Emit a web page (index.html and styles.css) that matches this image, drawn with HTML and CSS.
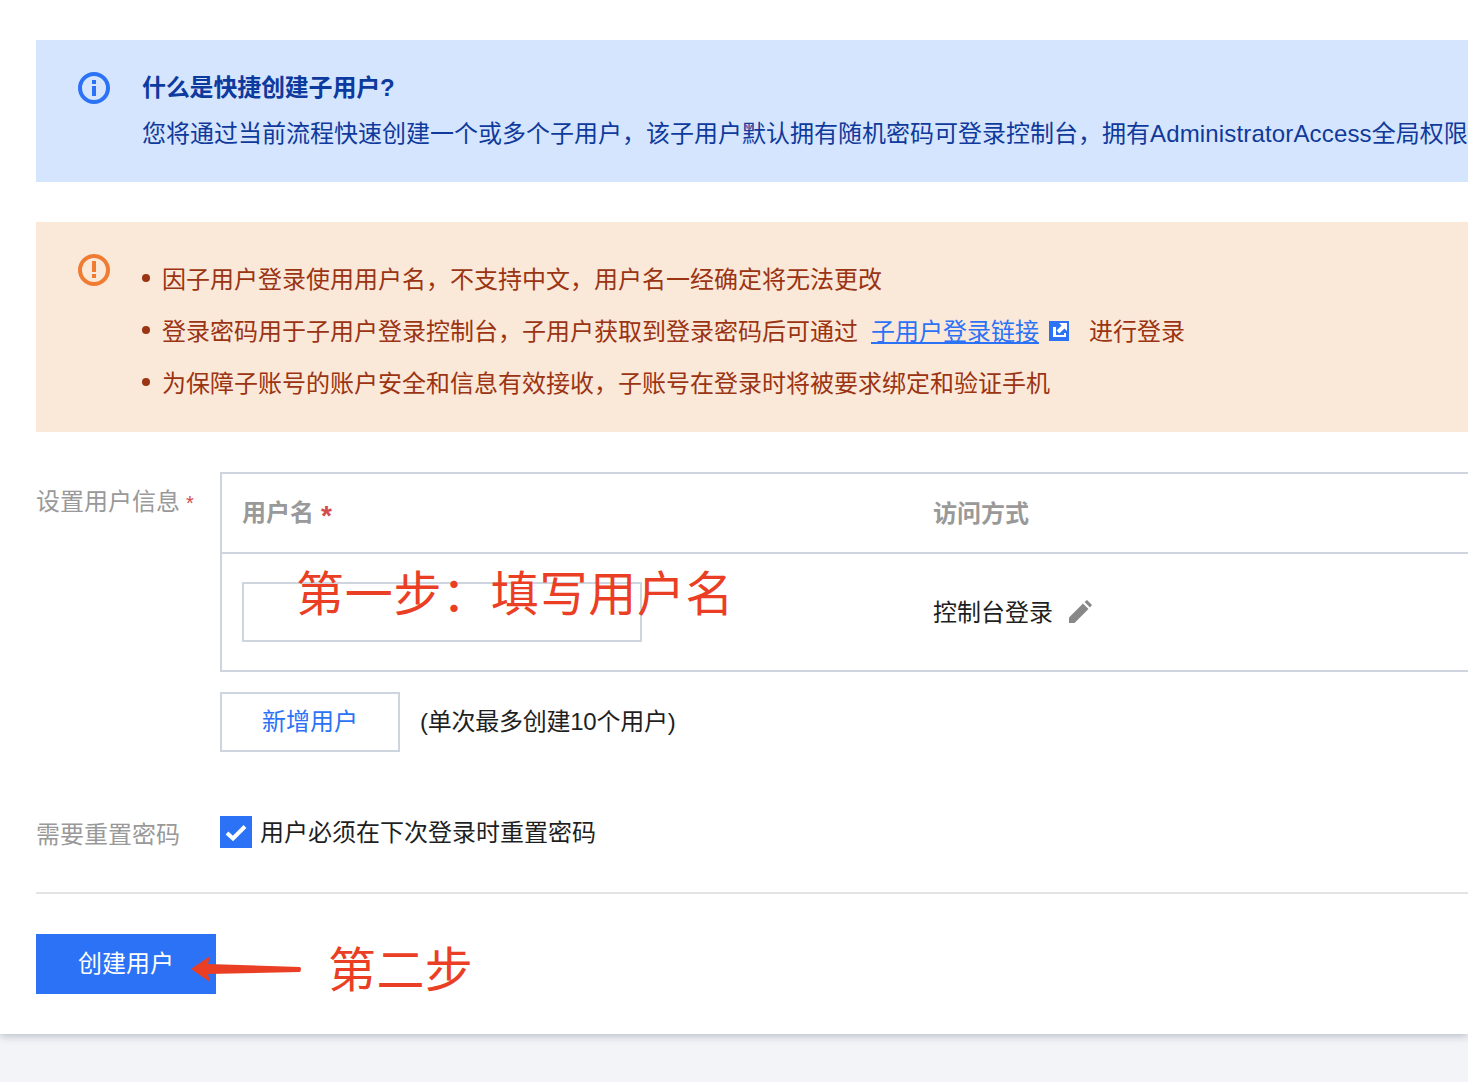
FILE: index.html
```html
<!DOCTYPE html>
<html lang="zh-CN">
<head>
<meta charset="utf-8">
<title>快捷创建子用户</title>
<link rel="stylesheet" href="styles.css">
</head>
<body>
<main class="page">
  <section class="notice notice-info">
    <svg class="notice-icon" viewBox="0 0 32 32"><circle cx="16" cy="16" r="14" fill="none" stroke="#2b72f6" stroke-width="4"/><rect x="14" y="8" width="4" height="4" fill="#2b72f6"/><rect x="14" y="14" width="4" height="10" fill="#2b72f6"/></svg>
    <div class="notice-body">
      <h2 class="notice-title">什么是快捷创建子用户?</h2>
      <p class="notice-text">您将通过当前流程快速创建一个或多个子用户，该子用户默认拥有随机密码可登录控制台，拥有<span class="latin">AdministratorAccess</span>全局权限</p>
    </div>
  </section>

  <section class="notice notice-warn">
    <svg class="notice-icon" viewBox="0 0 32 32"><circle cx="16" cy="16" r="14" fill="none" stroke="#f07b33" stroke-width="4"/><rect x="14" y="7" width="4" height="11" fill="#f07b33"/><rect x="14" y="20" width="4" height="4" fill="#f07b33"/></svg>
    <ul class="warn-list">
      <li>因子用户登录使用用户名，不支持中文，用户名一经确定将无法更改</li>
      <li>登录密码用于子用户登录控制台，子用户获取到登录密码后可通过<a class="warn-link" href="#">子用户登录链接</a><svg class="ext-icon" viewBox="0 0 20 20"><rect width="20" height="20" fill="#2b72f6"/><path d="M4 6h3v8h8v-2h2v4H4z" fill="#fff"/><path d="M10 2h8v8l-2.600-2.600-5 5-2.800-2.800 5-5z" fill="#fff"/></svg><span class="after-link">进行登录</span></li>
      <li>为保障子账号的账户安全和信息有效接收，子账号在登录时将被要求绑定和验证手机</li>
    </ul>
  </section>

  <section class="form-row user-row">
    <div class="form-label">设置用户信息<span class="req">*</span></div>
    <div class="form-main">
      <div class="user-table">
        <div class="table-head">
          <div class="col-name">用户名<span class="req req-strong">*</span></div>
          <div class="col-access">访问方式</div>
        </div>
        <div class="table-row">
          <div class="col-name"><div class="name-input"></div></div>
          <div class="col-access access-value">控制台登录<svg class="edit-icon" viewBox="0 0 24 24"><path d="M1 23v-5.500L15 3.500 20.500 9 6.500 23z" fill="#888"/><path d="M16.500 2 19 0l5 5-2 2.500z" fill="#888"/></svg></div>
        </div>
      </div>
      <div class="add-row">
        <button class="btn-add" type="button">新增用户</button>
        <span class="add-hint">(单次最多创建10个用户)</span>
      </div>
    </div>
  </section>

  <section class="form-row reset-row">
    <div class="form-label">需要重置密码</div>
    <label class="check">
      <svg class="check-box" viewBox="0 0 32 32"><rect width="32" height="32" fill="#2b72f6"/><path d="M7 17l6 5.500L25 10.500" fill="none" stroke="#fff" stroke-width="4"/></svg>
      <span class="check-text">用户必须在下次登录时重置密码</span>
    </label>
  </section>

  <hr class="divider">

  <button class="btn-primary" type="button">创建用户</button>

  <div class="note note-one">第一步：填写用户名</div>
  <div class="note note-two">第二步</div>
  <svg class="note-arrow" viewBox="0 0 112 30"><path d="M1 14 20 1l-2 8 92 3q2 2 0 5L18 19l2 8z" fill="#ea3f24"/></svg>
</main>
<div class="footer-band"></div>
</body>
</html>
```
FILE: styles.css
```css
* { box-sizing: border-box; }
html, body { margin: 0; height: 100%; }
body {
  background: #f2f4f8;
  font-family: "Liberation Sans", "Noto Sans CJK SC", sans-serif;
  font-size: 24px;
  color: #1f1f1f;
  overflow: hidden;
}
.page {
  position: relative;
  height: 1034px;
  padding: 40px 0 0 36px;
  background: #fff;
  box-shadow: 0 2px 8px rgba(54, 58, 80, .3);
  overflow: hidden;
}
.notice {
  display: flex;
  padding-left: 42px;
  white-space: nowrap;
}
.notice-icon { flex: none; width: 32px; height: 32px; margin-right: 32px; }
.notice-info {
  height: 142px;
  padding-top: 32px;
  background: #d6e5fe;
  color: #0f3a9c;
}
.notice-title { margin: 0; font-size: 24px; line-height: 32px; font-weight: 700; color: #0d3a9e; letter-spacing: -.2px; }
.notice-text { margin: 14px 0 0; line-height: 32px; }
.latin { letter-spacing: .16px; }
.notice-warn {
  height: 210px;
  margin-top: 40px;
  padding-top: 32px;
  background: #fae8d8;
  color: #9a3413;
}
.warn-list { margin: 0; padding: 0; list-style: none; }
.warn-list li {
  position: relative;
  display: flex;
  align-items: center;
  height: 32px;
  margin-top: 7px;
  padding-left: 20px;
  white-space: pre;
}
.warn-list li + li { margin-top: 20px; }
.warn-list li::before {
  content: "";
  position: absolute;
  left: 0;
  top: 13px;
  width: 8px;
  height: 8px;
  border-radius: 50%;
  background: #9a3413;
}
.warn-link { margin-left: 13px; color: #2b72f6; text-decoration: underline; text-underline-offset: 2px; text-decoration-thickness: 2px; }
.ext-icon { width: 20px; height: 20px; margin: 4px 0 0 10px; }
.after-link { margin-left: 20px; }

.form-row { display: flex; }
.form-label { flex: none; width: 184px; color: #999; white-space: nowrap; }
.req { margin-left: 6px; color: #d34b4b; font-size: 20px; }
.req-strong { margin-left: 7px; font-weight: 700; font-size: 28px; line-height: 1; vertical-align: -4px; }
.user-row { margin-top: 40px; }
.user-row .form-label { padding-top: 14px; line-height: 32px; }
.form-main { flex: 1; min-width: 0; }
.user-table {
  width: 1300px;
  border: 2px solid #cfd5de;
  border-right: 0;
}
.table-head {
  display: flex;
  align-items: center;
  height: 80px;
  padding-bottom: 4px;
  border-bottom: 2px solid #cfd5de;
  color: #999;
  font-weight: 700;
}
.table-row { display: flex; height: 116px; padding-top: 28px; align-items: flex-start; }
.col-name { flex: none; width: 711px; padding-left: 20px; }
.col-access { flex: 1; }
.name-input { width: 400px; height: 60px; border: 2px solid #cfd5de; }
.access-value { display: flex; align-items: center; height: 56px; }
.edit-icon { width: 24px; height: 24px; margin: 4px 0 0 15px; }
.add-row { display: flex; align-items: center; margin-top: 20px; }
.btn-add {
  width: 180px;
  height: 60px;
  padding: 0 0 6px;
  border: 2px solid #cfd5de;
  background: #fff;
  color: #2b72f6;
  font: inherit;
}
.add-hint { margin: 0 0 6px 20px; letter-spacing: -.25px; }
.reset-row { margin-top: 64px; align-items: center; height: 32px; }
.check { display: flex; align-items: center; }
.check-box { width: 32px; height: 32px; margin-right: 8px; }
.check-text { margin-bottom: 4px; }
.divider { height: 2px; margin: 44px 0 0; border: 0; background: #e3e3e3; }
.btn-primary {
  display: block;
  width: 180px;
  height: 60px;
  margin-top: 40px;
  padding: 0 0 6px;
  border: 0;
  background: #2b72f6;
  color: #fff;
  font: inherit;
}
.note {
  position: absolute;
  color: #ea3f24;
  font-size: 48px;
  line-height: 60px;
  white-space: nowrap;
}
.note-one { left: 296px; top: 565px; letter-spacing: .7px; }
.note-two { left: 328px; top: 941px; letter-spacing: .4px; }
.note-arrow { position: absolute; left: 190px; top: 955px; width: 112px; height: 30px; }
```
